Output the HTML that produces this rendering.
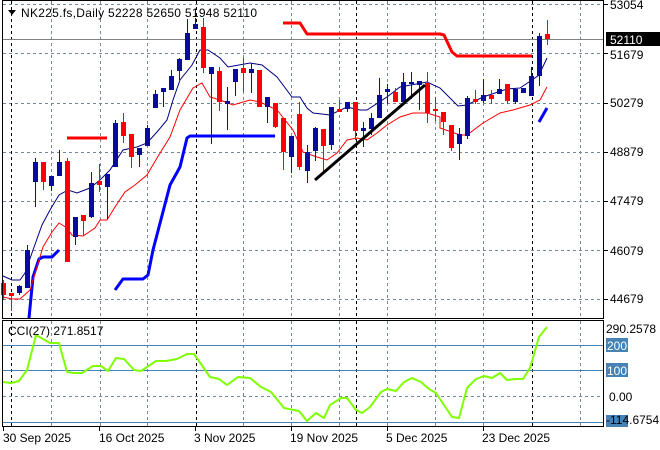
<!DOCTYPE html>
<html><head><meta charset="utf-8"><style>
html,body{margin:0;padding:0;background:#fff;}
svg{display:block;font-family:"Liberation Sans",sans-serif;font-size:12px;}
</style></head><body>
<svg width="660" height="450" viewBox="0 0 660 450" xmlns="http://www.w3.org/2000/svg">
<rect width="660" height="450" fill="#fff"/>
<g stroke="#778899" stroke-width="1" stroke-dasharray="3,3" fill="none">
<path d="M3 4.5H603M3 53.5H603M3 103.5H603M3 152.5H603M3 201.5H603M3 250.5H603M3 299.5H603"/>
<path d="M51.5 1V318M100.5 1V318M147.5 1V318M243.5 1V318M291.5 1V318M339.5 1V318M387.5 1V318M435.5 1V318M483.5 1V318M580.5 1V318"/>
<path d="M51.5 321V426M100.5 321V426M147.5 321V426M243.5 321V426M291.5 321V426M339.5 321V426M387.5 321V426M435.5 321V426M483.5 321V426M580.5 321V426M3 396.5H603"/>
</g>
<g stroke="#000" stroke-width="1" stroke-dasharray="3,3" fill="none">
<path d="M11.5 1V318M196.5 1V318M356.5 1V318M532.5 1V318M11.5 321V426M196.5 321V426M356.5 321V426M532.5 321V426"/>
</g>
<path d="M3 39.5H603" stroke="#808080"/>
<g fill="none" stroke-width="3" stroke-linejoin="round">
<polyline stroke="#ff0000" points="67,138 107,138"/>
<polyline stroke="#ff0000" points="283,23 300,23 307,34 440,34 444,35 452,52 457,56 532,56"/>
<polyline stroke="#0000ff" points="29,318 33,277 39,259 43,257 52,257 59,250"/>
<polyline stroke="#0000ff" points="115,290 123,279 143,279 148,275 153,250 170,185 180,167 187,138 190,136 275,136"/>
<polyline stroke="#0000ff" points="539,122 547,108"/>
</g>
<polyline fill="none" stroke="#000080" stroke-width="1" points="3,276 12,280 20,280 25,273 33,250 42,225 50,210 59,195 68,190 77,193 90,188 100,180 110,170 123,150 137,147 147,143 157,132 167,120 173,100 180,80 192,65 200,50 208,50 220,58 228,67 250,63 262,65 277,77 292,97 300,97 307,108 313,113 330,115 347,107 360,110 367,110 387,97 400,87 427,82 440,88 458,106 467,105 483,97 507,89 520,88 532,80 539,75 547,58"/>
<polyline fill="none" stroke="#ff0000" stroke-width="1" points="3,297 12,299 20,299 30,290 37,267 43,247 52,232 59,223 67,228 72,235 83,236 95,228 100,220 107,220 115,207 125,192 135,185 147,175 157,158 170,137 180,110 193,88 202,83 210,97 220,100 233,105 250,100 260,102 277,110 293,130 303,152 317,157 327,160 337,153 347,140 357,138 367,140 377,133 387,125 400,117 413,113 427,113 440,117 440,128 460,135 467,135 483,123 500,113 513,110 530,105 540,100 547,87"/>
<g stroke="#ff0000" fill="#ff0000">
<path d="M3.5 280V300M11.5 293V311M43.5 162V190M67.5 158V262M83.5 215V236M99.5 164V192M123.5 113V143M131.5 134V168M203.5 18V73M219.5 67V111M243.5 58V92M259.5 70V107M275.5 103V128M283.5 118V170M299.5 102V170M323.5 129V173M339.5 100V112M355.5 102V140M395.5 88V102M427.5 72V123M435.5 97V121M443.5 112V135M451.5 125V151M475.5 90V104M491.5 90V104M507.5 84V104M547.5 20V45"/>
</g>
<g fill="#ff0000">
<rect x="1" y="283" width="5" height="12"/><rect x="9" y="293" width="5" height="3"/><rect x="41" y="162" width="5" height="20"/><rect x="65" y="161" width="5" height="101"/><rect x="81" y="215" width="5" height="6"/><rect x="97" y="181" width="5" height="4"/><rect x="121" y="122" width="5" height="14"/><rect x="129" y="134" width="5" height="23"/><rect x="201" y="27" width="5" height="41"/><rect x="217" y="71" width="5" height="31"/><rect x="241" y="68" width="5" height="5"/><rect x="257" y="70" width="5" height="37"/><rect x="273" y="103" width="5" height="24"/><rect x="281" y="118" width="5" height="34"/><rect x="297" y="114" width="5" height="53"/><rect x="321" y="129" width="5" height="17"/><rect x="337" y="109" width="5" height="3"/><rect x="353" y="102" width="5" height="29"/><rect x="393" y="92" width="5" height="10"/><rect x="425" y="83" width="5" height="30"/><rect x="433" y="109" width="5" height="2"/><rect x="441" y="112" width="5" height="10"/><rect x="449" y="125" width="5" height="23"/><rect x="473" y="99" width="5" height="3"/><rect x="489" y="95" width="5" height="4"/><rect x="505" y="84" width="5" height="17"/><rect x="545" y="34" width="5" height="5"/>
</g>
<g stroke="#0000ff">
<path d="M19.5 285V295M27.5 245V288M35.5 158V207M51.5 176V191M59.5 150V176M75.5 217V245M91.5 172V218M107.5 174V219M115.5 120V167M139.5 148V167M147.5 125V146M155.5 90V108M163.5 88V107M171.5 70V90M179.5 58V80M187.5 19V60M195.5 18V29M211.5 67V144M227.5 87V130M235.5 69V96M251.5 63V93M267.5 97V123M291.5 136V173M307.5 145V183M315.5 127V161M331.5 107V150M347.5 102V112M363.5 122V147M371.5 113V135M379.5 78V118M387.5 84V104M403.5 73V102M411.5 72V99M419.5 81V110M459.5 128V160M467.5 96V139M483.5 79V103M499.5 79V94M515.5 88V104M523.5 88V93M531.5 67V96M539.5 33V86"/>
</g>
<g fill="#0a0a9e">
<rect x="17" y="286" width="5" height="7"/><rect x="25" y="250" width="5" height="38"/><rect x="33" y="162" width="5" height="20"/><rect x="49" y="176" width="5" height="10"/><rect x="57" y="162" width="5" height="14"/><rect x="73" y="217" width="5" height="20"/><rect x="89" y="183" width="5" height="34"/><rect x="105" y="174" width="5" height="13"/><rect x="113" y="123" width="5" height="44"/><rect x="137" y="148" width="5" height="7"/><rect x="145" y="128" width="5" height="18"/><rect x="153" y="94" width="5" height="14"/><rect x="161" y="88" width="5" height="4"/><rect x="169" y="76" width="5" height="14"/><rect x="177" y="59" width="5" height="12"/><rect x="185" y="33" width="5" height="27"/><rect x="193" y="24" width="5" height="5"/><rect x="209" y="67" width="5" height="7"/><rect x="225" y="101" width="5" height="3"/><rect x="233" y="69" width="5" height="13"/><rect x="249" y="69" width="5" height="4"/><rect x="265" y="97" width="5" height="10"/><rect x="289" y="136" width="5" height="21"/><rect x="305" y="152" width="5" height="19"/><rect x="313" y="128" width="5" height="23"/><rect x="329" y="107" width="5" height="38"/><rect x="345" y="102" width="5" height="7"/><rect x="361" y="128" width="5" height="3"/><rect x="369" y="118" width="5" height="11"/><rect x="377" y="95" width="5" height="23"/><rect x="385" y="89" width="5" height="3"/><rect x="401" y="82" width="5" height="20"/><rect x="409" y="82" width="5" height="2"/><rect x="417" y="81" width="5" height="4"/><rect x="457" y="134" width="5" height="10"/><rect x="465" y="98" width="5" height="38"/><rect x="481" y="95" width="5" height="6"/><rect x="497" y="89" width="5" height="5"/><rect x="513" y="89" width="5" height="13"/><rect x="521" y="88" width="5" height="5"/><rect x="529" y="76" width="5" height="20"/><rect x="537" y="36" width="5" height="40"/>
</g>
<line x1="315" y1="180" x2="425" y2="85" stroke="#000" stroke-width="3"/>
<rect x="2.5" y="0.5" width="601" height="318" fill="none" stroke="#000"/>
<rect x="2.5" y="320.5" width="601" height="106" fill="none" stroke="#000"/>
<g stroke="#4682b4"><path d="M3 345.5H603M3 370.5H603M3 422.5H603"/></g>
<polyline fill="none" stroke="#7fff00" stroke-width="2" stroke-linejoin="round" points="3,382 11,383 19,381 27,370 36,335 50,343 59,343 67,372 74,373 82,373 93,366 101,366 108,371 116,358 124,359 134,370 141,371 147,367 156,361 166,361 177,359 187,354 194,354 210,377 219,379 227,385 238,377 250,378 261,387 271,392 284,408 299,411 307,421 316,413 324,418 330,405 341,398 347,398 356,410 362,413 370,407 381,392 387,389 396,391 404,382 412,378 421,382 429,389 436,393 452,417 459,418 467,388 476,379 484,376 492,378 500,373 507,380 516,379 523,379 530,368 539,337 547,327"/>
<g stroke="#000"><path d="M604 4.5H608M604 53.5H608M604 103.5H608M604 152.5H608M604 201.5H608M604 250.5H608M604 299.5H608M3.5 427V431M99.5 427V431M195.5 427V431M291.5 427V431M387.5 427V431M483.5 427V431"/></g>
<g fill="#000">
<path d="M8 10L16 10L12 15Z"/>
<text x="21" y="17" textLength="236" lengthAdjust="spacing">NK225.fs,Daily  52228 52650 51948 52110</text>
<text x="8" y="335">CCI(27) 271.8517</text>
<text x="610" y="9">53054</text>
<text x="610" y="59">51679</text>
<text x="610" y="107">50279</text>
<text x="610" y="156">48879</text>
<text x="610" y="205">47479</text>
<text x="610" y="255">46079</text>
<text x="610" y="303">44679</text>
<text x="606" y="333">290.2578</text>
<text x="609" y="401">0.00</text>
<text x="3" y="442">30 Sep 2025</text>
<text x="99" y="442">16 Oct 2025</text>
<text x="194" y="442">3 Nov 2025</text>
<text x="290" y="442">19 Nov 2025</text>
<text x="386" y="442">5 Dec 2025</text>
<text x="482" y="442">23 Dec 2025</text>
</g>
<rect x="606" y="32" width="54" height="14" fill="#000"/>
<text x="610" y="44" fill="#fff">52110</text>
<rect x="606" y="338" width="22" height="14" fill="#4682b4"/>
<text x="607" y="350" fill="#fff">200</text>
<rect x="606" y="363" width="22" height="14" fill="#4682b4"/>
<text x="607" y="375" fill="#fff">100</text>
<rect x="606" y="415" width="22" height="12" fill="#4682b4"/>
<text x="606" y="424" fill="#000">-114.6754</text>
</svg>
</body></html>
